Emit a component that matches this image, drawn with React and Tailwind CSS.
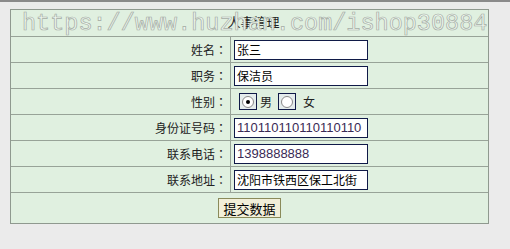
import React from "react";

const cjk = "font-['SimSun','Noto_Sans_CJK_SC',sans-serif]";

function Row({ label, children }) {
  return (
    <div className="flex h-[26px] border-b border-[#98a398]">
      <div className={`w-[220px] shrink-0 border-r border-[#98a398] flex items-center justify-end pr-[3px] text-[12px] text-[#222] ${cjk}`}>
        {label}
        <span className="font-['Noto_Sans_CJK_TC',sans-serif]">：</span>
      </div>
      <div className="flex items-center pl-[3px]">{children}</div>
    </div>
  );
}

function Input({ value, mono }) {
  return (
    <div
      className={`w-[134px] h-[20px] bg-white border-[1.5px] border-[#101a48] flex items-center pl-[2px] overflow-hidden whitespace-nowrap ${
        mono
          ? "font-['Liberation_Sans',sans-serif] text-[13px] text-[#3a2a55]"
          : `${cjk} text-[12px] text-black`
      }`}
    >
      {value}
    </div>
  );
}

function Radio({ checked }) {
  return (
    <div className="w-[18px] h-[17px] border-[1.5px] border-[#101a48] bg-[#e4ecec] flex items-center justify-center">
      <div className="w-[12px] h-[12px] rounded-full border border-[#8a8a8a] bg-white flex items-center justify-center">
        {checked && <div className="w-[4px] h-[4px] rounded-full bg-black" />}
      </div>
    </div>
  );
}

export default function App() {
  return (
    <div className="w-[510px] h-[249px] bg-[#ebebeb] relative overflow-hidden">
      <div className="h-[2px] bg-[#8a8a8a]" />
      <div className="ml-[10px] mt-[7px] w-[479px] border border-[#8f998f] bg-[#e0f0e0]">
        <div className={`h-[27px] border-b border-[#98a398] flex items-center justify-center text-[13px] text-[#222] ${cjk} pb-[3px] pl-[8px]`}>
          人事管理
        </div>
        <Row label="姓名">
          <Input value="张三" />
        </Row>
        <Row label="职务">
          <Input value="保洁员" />
        </Row>
        <Row label="性别">
          <div className={`flex items-center text-[12px] ${cjk} text-[#222]`}>
            <div className="ml-[5px]"><Radio checked /></div>
            <span className="ml-[3px]">男</span>
            <div className="ml-[6px]"><Radio /></div>
            <span className="ml-[7px]">女</span>
          </div>
        </Row>
        <Row label="身份证号码">
          <Input value="110110110110110110" mono />
        </Row>
        <Row label="联系电话">
          <Input value="1398888888" mono />
        </Row>
        <Row label="联系地址">
          <Input value="沈阳市铁西区保工北街" />
        </Row>
        <div className="h-[30px] flex items-center justify-center">
          <button className={`h-[20px] px-[4px] border border-[#8a8a5a] bg-[#f2efd9] text-[13px] text-black ${cjk} leading-none`}>
            提交数据
          </button>
        </div>
      </div>
      <div className="absolute left-[22px] top-[12px] font-['Liberation_Mono',monospace] text-[23.5px] leading-none text-[#eef7ee] [-webkit-text-stroke:0.7px_#a4aca4] whitespace-nowrap pointer-events-none">
        https://www.huzhan.com/ishop30884
      </div>
    </div>
  );
}
